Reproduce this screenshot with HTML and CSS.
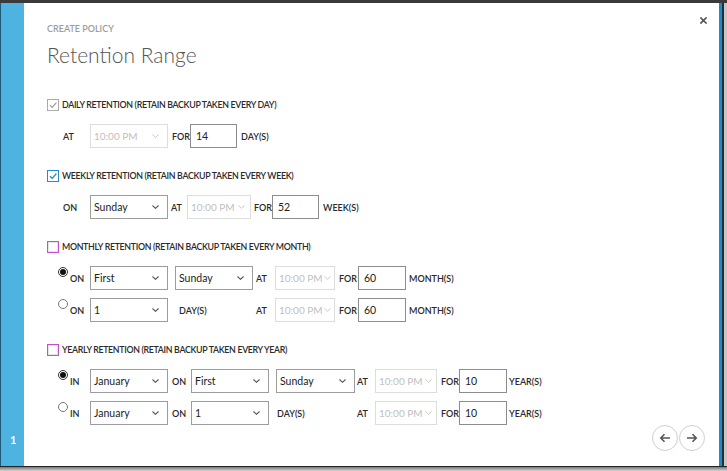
FILE: index.html
```html
<!DOCTYPE html>
<html>
<head>
<meta charset="utf-8">
<title>Create Policy - Retention Range</title>
<link rel="stylesheet" href="styles.css">
</head>
<body>
<div class="topbar"></div>
<div class="frame">
  <aside class="steps"><span class="step">1</span></aside>
  <main class="panel">
    <header class="head">
      <div>
        <div class="kicker">CREATE POLICY</div>
        <h1 class="title">Retention Range</h1>
      </div>
      <svg class="close" width="7" height="7" viewBox="0 0 7 7"><path d="M1 1L6 6M6 1L1 6" stroke="#505050" stroke-width="1.6" stroke-linecap="square"/></svg>
    </header>

    <div class="form">
      <section class="sec">
        <div class="sec-head">
          <span class="cb cb-grey"><svg width="10" height="10" viewBox="0 0 10 10"><path d="M2 5.2L4.2 7.4L8.4 2.6" fill="none" stroke="#9a9a9a" stroke-width="1.1"/></svg></span>
          <span class="sec-title">DAILY RETENTION (RETAIN BACKUP TAKEN EVERY DAY)</span>
        </div>
        <div class="row indent">
          <span class="lbl lead">AT</span>
          <div class="sel off"><span>10:00 PM</span><svg width="7" height="4" viewBox="0 0 7 4"><path d="M0.5 0.5L3.5 3.3L6.5 0.5" fill="none" stroke="#c8c8c8" stroke-width="1"/></svg></div>
          <span class="lbl c-for-d">FOR</span>
          <div class="num">14</div>
          <span class="lbl unit">DAY(S)</span>
        </div>
      </section>

      <section class="sec">
        <div class="sec-head">
          <span class="cb cb-blue"><svg width="10" height="10" viewBox="0 0 10 10"><path d="M2 5.2L4.2 7.4L8.4 2.6" fill="none" stroke="#2a7fc0" stroke-width="1.3"/></svg></span>
          <span class="sec-title">WEEKLY RETENTION (RETAIN BACKUP TAKEN EVERY WEEK)</span>
        </div>
        <div class="row indent">
          <span class="lbl lead">ON</span>
          <div class="sel"><span>Sunday</span><svg width="7" height="4" viewBox="0 0 7 4"><path d="M0.5 0.5L3.5 3.3L6.5 0.5" fill="none" stroke="#555" stroke-width="1.1"/></svg></div>
          <span class="lbl c-at-w">AT</span>
          <div class="sel off t-w"><span>10:00 PM</span><svg width="7" height="4" viewBox="0 0 7 4"><path d="M0.5 0.5L3.5 3.3L6.5 0.5" fill="none" stroke="#c8c8c8" stroke-width="1"/></svg></div>
          <span class="lbl c-for-w">FOR</span>
          <div class="num">52</div>
          <span class="lbl unit">WEEK(S)</span>
        </div>
      </section>

      <section class="sec">
        <div class="sec-head">
          <span class="cb cb-pink"></span>
          <span class="sec-title">MONTHLY RETENTION (RETAIN BACKUP TAKEN EVERY MONTH)</span>
        </div>
        <div class="row radio-row">
          <span class="lead-r"><span class="radio on"></span><span class="lbl">ON</span></span>
          <div class="sel"><span>First</span><svg width="7" height="4" viewBox="0 0 7 4"><path d="M0.5 0.5L3.5 3.3L6.5 0.5" fill="none" stroke="#555" stroke-width="1.1"/></svg></div>
          <div class="sel sp"><span>Sunday</span><svg width="7" height="4" viewBox="0 0 7 4"><path d="M0.5 0.5L3.5 3.3L6.5 0.5" fill="none" stroke="#555" stroke-width="1.1"/></svg></div>
          <span class="lbl c-at-m">AT</span>
          <div class="sel off t-m"><span>10:00 PM</span><svg width="7" height="4" viewBox="0 0 7 4"><path d="M0.5 0.5L3.5 3.3L6.5 0.5" fill="none" stroke="#c8c8c8" stroke-width="1"/></svg></div>
          <span class="lbl c-for-m">FOR</span>
          <div class="num wide">60</div>
          <span class="lbl unit-m">MONTH(S)</span>
        </div>
        <div class="row radio-row">
          <span class="lead-r"><span class="radio"></span><span class="lbl">ON</span></span>
          <div class="sel"><span>1</span><svg width="7" height="4" viewBox="0 0 7 4"><path d="M0.5 0.5L3.5 3.3L6.5 0.5" fill="none" stroke="#555" stroke-width="1.1"/></svg></div>
          <span class="lbl c-days-m">DAY(S)</span>
          <span class="lbl c-at-m">AT</span>
          <div class="sel off t-m"><span>10:00 PM</span><svg width="7" height="4" viewBox="0 0 7 4"><path d="M0.5 0.5L3.5 3.3L6.5 0.5" fill="none" stroke="#c8c8c8" stroke-width="1"/></svg></div>
          <span class="lbl c-for-m">FOR</span>
          <div class="num wide">60</div>
          <span class="lbl unit-m">MONTH(S)</span>
        </div>
      </section>

      <section class="sec">
        <div class="sec-head">
          <span class="cb cb-pink"></span>
          <span class="sec-title">YEARLY RETENTION (RETAIN BACKUP TAKEN EVERY YEAR)</span>
        </div>
        <div class="row radio-row">
          <span class="lead-r"><span class="radio on"></span><span class="lbl">IN</span></span>
          <div class="sel"><span>January</span><svg width="7" height="4" viewBox="0 0 7 4"><path d="M0.5 0.5L3.5 3.3L6.5 0.5" fill="none" stroke="#555" stroke-width="1.1"/></svg></div>
          <span class="lbl c-on-y">ON</span>
          <div class="sel"><span>First</span><svg width="7" height="4" viewBox="0 0 7 4"><path d="M0.5 0.5L3.5 3.3L6.5 0.5" fill="none" stroke="#555" stroke-width="1.1"/></svg></div>
          <div class="sel sp wide"><span>Sunday</span><svg width="7" height="4" viewBox="0 0 7 4"><path d="M0.5 0.5L3.5 3.3L6.5 0.5" fill="none" stroke="#555" stroke-width="1.1"/></svg></div>
          <span class="lbl c-at-y">AT</span>
          <div class="sel off t-y"><span>10:00 PM</span><svg width="7" height="4" viewBox="0 0 7 4"><path d="M0.5 0.5L3.5 3.3L6.5 0.5" fill="none" stroke="#c8c8c8" stroke-width="1"/></svg></div>
          <span class="lbl c-for-y">FOR</span>
          <div class="num wide">10</div>
          <span class="lbl unit-y">YEAR(S)</span>
        </div>
        <div class="row radio-row">
          <span class="lead-r"><span class="radio"></span><span class="lbl">IN</span></span>
          <div class="sel"><span>January</span><svg width="7" height="4" viewBox="0 0 7 4"><path d="M0.5 0.5L3.5 3.3L6.5 0.5" fill="none" stroke="#555" stroke-width="1.1"/></svg></div>
          <span class="lbl c-on-y">ON</span>
          <div class="sel"><span>1</span><svg width="7" height="4" viewBox="0 0 7 4"><path d="M0.5 0.5L3.5 3.3L6.5 0.5" fill="none" stroke="#555" stroke-width="1.1"/></svg></div>
          <span class="lbl c-days-y">DAY(S)</span>
          <span class="lbl c-at-y">AT</span>
          <div class="sel off t-y"><span>10:00 PM</span><svg width="7" height="4" viewBox="0 0 7 4"><path d="M0.5 0.5L3.5 3.3L6.5 0.5" fill="none" stroke="#c8c8c8" stroke-width="1"/></svg></div>
          <span class="lbl c-for-y">FOR</span>
          <div class="num wide">10</div>
          <span class="lbl unit-y">YEAR(S)</span>
        </div>
      </section>
    </div>

    <footer class="nav">
      <span class="navbtn"><svg width="12" height="10" viewBox="0 0 12 10"><path d="M11 5H2M5.5 1.3L1.8 5L5.5 8.7" fill="none" stroke="#555" stroke-width="1.6"/></svg></span>
      <span class="navbtn"><svg width="12" height="10" viewBox="0 0 12 10"><path d="M1 5H10M6.5 1.3L10.2 5L6.5 8.7" fill="none" stroke="#555" stroke-width="1.6"/></svg></span>
    </footer>
  </main>
  <div class="edge"></div>
</div>
<div class="shadow"></div>
</body>
</html>
```
FILE: styles.css
```css
* { box-sizing: border-box; }
html, body { margin: 0; padding: 0; }
body {
  width: 727px;
  height: 471px;
  overflow: hidden;
  background: #c6c6c6;
  font-family: "Lato", "Open Sans", "Liberation Sans", sans-serif;
  color: #333;
}
.topbar {
  height: 3px;
  background: #3a3a3a;
}
.frame { display: flex; height: 463px; }
.steps {
  width: 24px;
  background: #4fb3e2;
  border-left: 1px solid #1f5a78;
  display: flex;
  flex-direction: column;
  justify-content: flex-end;
  padding: 0 0 19px 9px;
}
.step { color: #fff; font-weight: 700; font-size: 11px; line-height: 14px; }
.panel {
  width: 698px;
  background: #fff;
  border-right: 3px solid #1a8bcc;
  padding: 14px 12px 0 23px;
  display: flex;
  flex-direction: column;
}
.edge { width: 2px; background: #2c2c2c; }
.shadow { height: 5px; background: linear-gradient(#242424 0 1px, #777 1px, #d4d4d4); }

.head { display: flex; justify-content: space-between; align-items: flex-start; }
.kicker { margin-top: 5px; font-size: 9px; line-height: 14px; font-weight: 600; color: #9d9d9d; }
.title { margin: 4px 0 0; font-size: 21px; line-height: 30px; font-weight: 300; color: #555; }
.close { display: block; }

.form { margin-top: 29px; }
.sec + .sec { margin-top: 22px; }
.sec-head { display: flex; align-items: center; gap: 3px; height: 12px; }
.cb {
  width: 12px; height: 12px;
  border: 1px solid #ababab;
  display: flex; align-items: center; justify-content: center;
}
.cb-blue { border-color: #2a8ad0; }
.cb-pink { border-color: #c64fca; box-shadow: inset 0 0 0 1px #e4e4e4; }
.sec-title { font-size: 8.8px; letter-spacing: -0.32px; font-weight: 600; line-height: 12px; color: #2a2a2a; white-space: nowrap; }

.row { display: flex; align-items: center; height: 24px; margin-top: 8px; }
.sec-head + .row { margin-top: 13px; }
.indent { padding-left: 16px; }
.radio-row { padding-left: 11px; }

.lbl { font-size: 9px; font-weight: 600; color: #2a2a2a; white-space: nowrap; }
.lead { width: 27px; }
.lead-r { width: 32px; height: 24px; display: flex; align-items: center; }
.radio {
  width: 10px; height: 10px;
  border-radius: 50%;
  border: 1px solid #777;
  align-self: flex-start;
  margin-top: 1px;
  margin-right: 2px;
  display: flex; align-items: center; justify-content: center;
}
.radio.on { border-color: #333; }
.radio.on::after { content: ""; width: 6px; height: 6px; border-radius: 50%; background: #111; }

.sel {
  display: flex; align-items: center; justify-content: space-between;
  width: 78px; height: 24px;
  border: 1px solid #9c9c9c;
  padding: 0 8px 0 3px;
  font-size: 10.5px;
  color: #222;
  flex: none;
  white-space: nowrap;
  overflow: hidden;
}
.sel span { overflow: hidden; }
.sel svg { flex: none; }
.sel.wide { width: 79px; }
.sel.sp { margin-left: 7px; }
.sel.off { border-color: #dddddd; color: #c0c0c0; font-size: 10px; }
.t-w { width: 64px; padding-right: 5px; }
.t-m { width: 60px; padding-right: 3px; }
.t-y { width: 62px; padding-right: 4px; }

.num {
  width: 47px; height: 24px;
  border: 1px solid #8c8c8c;
  padding-left: 5px;
  font-size: 10.5px;
  color: #222;
  display: flex; align-items: center;
  flex: none;
}
.num.wide { width: 48px; }

.c-for-d { width: 22px; padding-left: 4px; }
.unit { padding-left: 4px; }
.c-at-w { width: 19px; padding-left: 3px; }
.c-for-w { width: 21px; padding-left: 3px; }
.c-at-m { width: 22px; padding-left: 3px; }
.c-for-m { width: 23px; padding-left: 4px; }
.c-days-m { width: 85px; padding-left: 11px; }
.unit-m { padding-left: 3px; }
.c-on-y { width: 23px; padding-left: 4px; }
.c-at-y { width: 20px; padding-left: 2px; }
.c-for-y { width: 22px; padding-left: 4px; }
.c-days-y { width: 86px; padding-left: 8px; }
.unit-y { padding-left: 2px; }

.nav {
  margin-top: auto;
  margin-bottom: 15px;
  display: flex;
  justify-content: flex-end;
  gap: 1px;
  margin-right: 2px;
}
.navbtn {
  width: 26px; height: 26px;
  border: 1.5px solid #cfcfcf;
  border-radius: 50%;
  display: flex; align-items: center; justify-content: center;
}
```
